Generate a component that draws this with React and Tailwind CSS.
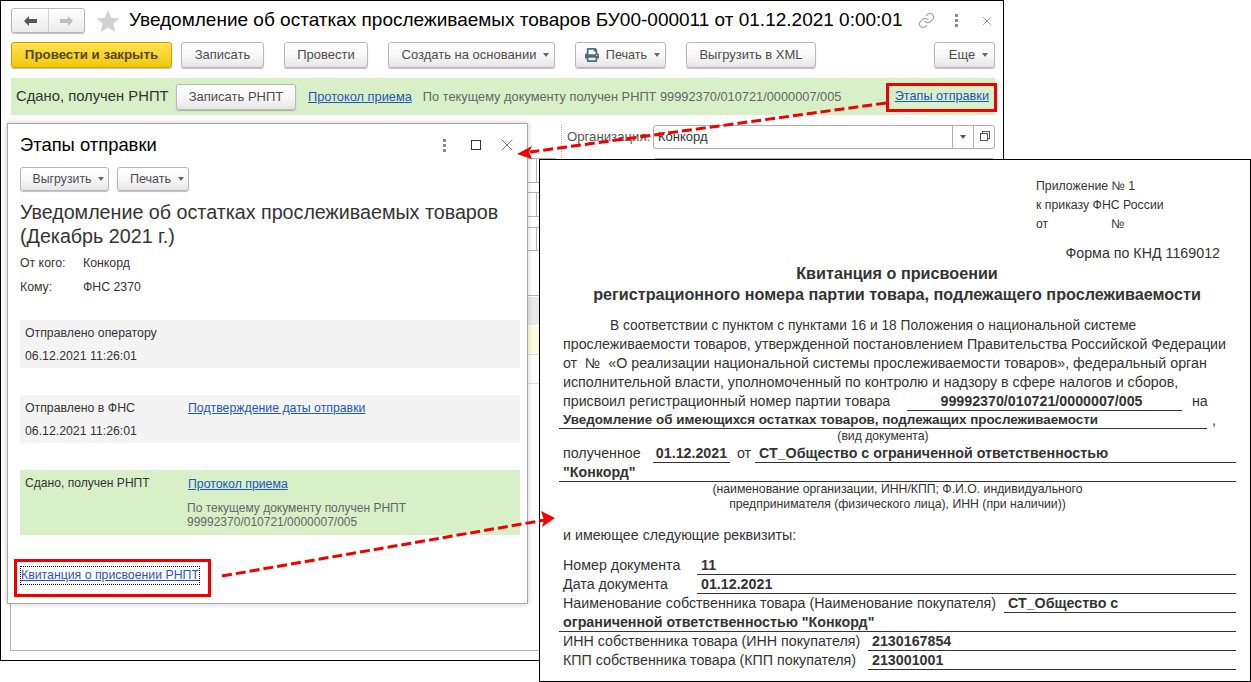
import { FaPrint } from "react-icons/fa";
import { Link as LinkIcon, X } from "lucide-react";

const Caret = () => (
    <span className="ml-[7px] inline-block border-x-[3.5px] border-t-[4px] border-x-transparent border-t-[#666]" />
);

const Btn = ({ children, caret, className = "" }) => (
    <div
        className={`flex h-[26px] items-center justify-center rounded-[3px] border border-[#b8b8b8] bg-gradient-to-b from-white via-[#f8f8f8] to-[#e6e6e6] text-[13px] text-[#4d4d4d] shadow-[0_1px_1px_rgba(0,0,0,0.25)] ${caret ? "pl-[8px]" : ""} ${className}`}
    >
        {children}
        {caret && <Caret />}
    </div>
);

const Kebab = () => (
    <div className="flex flex-col gap-[2px]">
        <span className="h-[3px] w-[3px] bg-[#8a8a8a]" />
        <span className="h-[3px] w-[3px] bg-[#8a8a8a]" />
        <span className="h-[3px] w-[3px] bg-[#8a8a8a]" />
    </div>
);

const BgRow = ({ h, split }) => (
    <div className={`${h} border-b border-[#b4b4b4]`}>
        {split && <div className="h-full w-[526px] border-r border-[#b4b4b4]" />}
    </div>
);

const MainWindow = () => (
    <div className="absolute left-0 top-0 flex h-[661px] w-[1004px] flex-col border border-black bg-white">
        <div className="mt-[7px] flex h-[25px] items-center pl-[10px] pr-[9px]">
            <div className="flex h-[25px] w-[74px] shrink-0 items-center rounded-[3px] border border-[#b8b8b8] bg-gradient-to-b from-white to-[#ececec] shadow-[0_1px_1px_rgba(0,0,0,0.25)]">
                <div className="flex h-full w-[37px] items-center justify-center border-r border-[#cfcfcf]">
                    <svg width="14" height="12" viewBox="0 0 14 12">
                        <path d="M6 1 1 6l5 5V8h8V4H6z" fill="#555" />
                    </svg>
                </div>
                <div className="flex flex-1 items-center justify-center">
                    <svg width="14" height="12" viewBox="0 0 14 12">
                        <path d="M8 1l5 5-5 5V8H0V4h8z" fill="#bdbdbd" />
                    </svg>
                </div>
            </div>
            <svg className="ml-[11px] shrink-0" width="24" height="22" viewBox="0 0 24 23">
                <path d="M12 0l3.500 8 8.500.8-6.400 5.700 1.900 8.500L12 18.500 4.500 23l1.900-8.500L0 8.800 8.500 8z" fill="#d2d2d2" />
            </svg>
            <h1 className="ml-[9px] whitespace-nowrap text-[19px] text-black">
                Уведомление об остатках прослеживаемых товаров БУ00-000011 от 01.12.2021 0:00:01
            </h1>
            <LinkIcon className="ml-auto shrink-0 text-[#a0a0a0]" size={17} strokeWidth={1.5} />
            <div className="ml-[20px]">
                <Kebab />
            </div>
            <X className="ml-[22px] shrink-0 text-[#8c8c8c]" size={14} strokeWidth={1.5} />
        </div>
        <div className="ml-[10px] mr-[8px] mt-[9px] flex">
            <div className="flex h-[26px] w-[161px] items-center justify-center rounded-[3px] border border-[#c4a400] bg-gradient-to-b from-[#ffe24a] to-[#f0c800] text-[13.3px] font-bold text-[#57480a] shadow-[0_1px_1px_rgba(0,0,0,0.25)]">
                Провести и закрыть
            </div>
            <Btn className="ml-[9px] w-[83px]">Записать</Btn>
            <Btn className="ml-[20px] w-[84px]">Провести</Btn>
            <Btn className="ml-[20px] w-[167px]" caret>Создать на основании</Btn>
            <Btn className="ml-[20px] w-[91px] !pl-[4px] !text-[12.6px]" caret>
                <FaPrint className="mr-[7px] text-[#4f6b80]" size={14} />
                Печать
            </Btn>
            <Btn className="ml-[20px] w-[130px]">Выгрузить в XML</Btn>
            <Btn className="ml-auto w-[61px]" caret>Еще</Btn>
        </div>
        <div className="ml-[10px] mr-[8px] mt-[10px] flex h-[37px] items-center bg-[#d8f0c8] pl-[5px] text-[#4d4d4d]">
            <span className="w-[160px] whitespace-nowrap text-[14.8px] text-[#333]">Сдано, получен РНПТ</span>
            <Btn className="h-[26px] w-[120px]">Записать РНПТ</Btn>
            <a className="ml-[12px] whitespace-nowrap text-[12.8px] text-[#1f55c0] underline">Протокол приема</a>
            <span className="ml-[11px] whitespace-nowrap text-[12.8px] text-[#666]">
                По текущему документу получен РНПТ 99992370/010721/0000007/005
            </span>
            <a className="ml-auto mr-[6px] whitespace-nowrap text-[12.7px] text-[#1f55c0] underline">Этапы отправки</a>
        </div>
        <div className="flex flex-1">
            <div className="ml-[9px] mb-[9px] mt-[43px] flex w-[546px] flex-col border-x border-b border-[#b4b4b4]">
                <div className="border-t border-[#b4b4b4]" />
                <BgRow h="h-[24px]" split />
                <BgRow h="h-[10px]" />
                <BgRow h="h-[24px]" split />
                <BgRow h="h-[11px]" />
                <BgRow h="h-[23px]" split />
                <BgRow h="h-[45px]" />
                <div className="mt-[1px] h-[28px] bg-[#e9e9e9]" />
                <div className="mt-[2px] h-[26px] bg-gradient-to-r from-[#ffd890] via-[#fff8d0] to-[#fffbe0]" />
                <div className="mt-[1px] border-t border-[#e0e0e0]" />
                <div className="h-[29px] border-b border-[#e0e0e0]" />
            </div>
            <div className="ml-[5px] mt-[10px] flex-1 border-l border-dotted border-[#b0b0b0] pl-[5px] pr-[8px]">
                <div className="flex h-[24px] items-center">
                    <span className="w-[86px] whitespace-nowrap text-[13.2px] text-[#555]">Организация:</span>
                    <div className="flex h-[24px] flex-1 items-center rounded-[3px] border border-[#b0b0b0] pl-[4px] text-[13px] text-[#333]">
                        <span className="flex-1">Конкорд</span>
                        <div className="flex h-full w-[21px] items-center justify-center border-l border-[#b0b0b0]">
                            <span className="inline-block border-x-[3.5px] border-t-[4px] border-x-transparent border-t-[#555]" />
                        </div>
                        <div className="flex h-full w-[21px] items-center justify-center border-l border-[#b0b0b0]">
                            <span className="h-[8px] w-[8px] border border-[#555] shadow-[2px_-2px_0_-1px_#fff,2px_-2px_0_0_#555]" />
                        </div>
                    </div>
                </div>
                <div className="ml-[86px] mt-[9px] h-[24px] rounded-[3px] border border-[#b0b0b0]" />
            </div>
        </div>
    </div>
);

const Stage = ({ className = "", children }) => (
    <div className={`ml-[12px] w-[500px] text-[12.3px] text-[#333] ${className}`}>{children}</div>
);

const Dialog = () => (
    <div className="absolute left-[7px] top-[123px] flex h-[481px] w-[521px] flex-col border border-[#a8a8a8] bg-white shadow-[0_0_6px_rgba(0,0,0,0.2)]">
        <div className="mt-[9px] flex h-[24px] items-center pl-[12px] pr-[10px]">
            <h2 className="text-[18.4px] text-black">Этапы отправки</h2>
            <div className="ml-auto">
                <Kebab />
            </div>
            <span className="ml-[25px] h-[10px] w-[10px] border border-[#333]" />
            <X className="ml-[16px] shrink-0 text-[#555]" size={20} strokeWidth={1} />
        </div>
        <div className="ml-[12px] mt-[10px] flex gap-[8px]">
            <Btn className="!h-[24px] w-[89px] !text-[12.3px]" caret>Выгрузить</Btn>
            <Btn className="!h-[24px] w-[72px] !text-[12.5px]" caret>Печать</Btn>
        </div>
        <div className="ml-[12px] mt-[9px] whitespace-nowrap text-[19.7px] leading-[24px] text-[#333]">
            Уведомление об остатках прослеживаемых товаров
            <br />
            (Декабрь 2021 г.)
        </div>
        <div className="ml-[12px] mt-[3px] grid grid-cols-[63px_1fr] text-[12.3px] leading-[24px] text-[#333]">
            <span>От кого:</span>
            <span>Конкорд</span>
            <span>Кому:</span>
            <span>ФНС 2370</span>
        </div>
        <Stage className="mt-[21px] h-[48px] bg-[#f4f4f4] pl-[5px] pt-[2px] leading-[23px]">
            <div>Отправлено оператору</div>
            <div>06.12.2021 11:26:01</div>
        </Stage>
        <Stage className="mt-[27px] grid h-[48px] grid-cols-[163px_1fr] bg-[#f4f4f4] pl-[5px] pt-[2px] leading-[23px]">
            <div>Отправлено в ФНС</div>
            <a className="text-[#1f55c0] underline">Подтверждение даты отправки</a>
            <div>06.12.2021 11:26:01</div>
        </Stage>
        <Stage className="mt-[27px] grid h-[65px] grid-cols-[163px_1fr] bg-[#d8f0c8] pl-[5px] pt-[3px]">
            <div className="text-[12.1px] leading-[20px]">Сдано, получен РНПТ</div>
            <div>
                <a className="block leading-[22px] text-[#1f55c0] underline">Протокол приема</a>
                <div className="-ml-[1px] mt-[6px] text-[12px] leading-[14px] text-[#666]">
                    По текущему документу получен РНПТ
                    <br />
                    99992370/010721/0000007/005
                </div>
            </div>
        </Stage>
        <a className="ml-[12px] mt-[31px] h-[19px] w-[180px] whitespace-nowrap border border-dotted border-black text-[12.3px] leading-[17px] text-[#1f55c0] underline">
            Квитанция о присвоении РНПТ
        </a>
    </div>
);

const Line = ({ children, className = "" }) => (
    <div className={`h-[19px] whitespace-nowrap leading-[19px] ${className}`}>{children}</div>
);

// underlined value in the receipt form
const Val = ({ children, className = "" }) => (
    <span className={`h-full border-b border-[#333] font-bold ${className}`}>{children}</span>
);

const Row = ({ children, className = "" }) => (
    <div className={`flex h-[19px] whitespace-nowrap pl-[4px] leading-[19px] ${className}`}>{children}</div>
);

const Receipt = () => (
    <div className="absolute left-[539px] top-[159px] h-[523px] w-[712px] border border-black bg-white text-[14.25px] text-[#333]">
        <div className="ml-[496px] pt-[17px] text-[12.3px] leading-[19px]">
            <div>Приложение № 1</div>
            <div>к приказу ФНС России</div>
            <div className="flex">
                <span className="w-[75px]">от</span>
                <span>№</span>
            </div>
        </div>
        <div className="mt-[10px] pr-[30px] text-right leading-[19px]">Форма по КНД 1169012</div>
        <div className="pl-[4px] text-center text-[16.2px] font-bold leading-[21px]">
            <div>Квитанция о присвоении</div>
            <div>регистрационного номера партии товара, подлежащего прослеживаемости</div>
        </div>
        <div className="ml-[19px] mt-[11px] w-[677px]">
            <Line className="pl-[51px] text-[13.75px]">В соответствии с пунктом с пунктами 16 и 18 Положения о национальной системе</Line>
            <Line className="pl-[4px]">прослеживаемости товаров, утвержденной постановлением Правительства Российской Федерации</Line>
            <Line className="pl-[4px]">от&nbsp; №&nbsp; «О реализации национальной системы прослеживаемости товаров», федеральный орган</Line>
            <Line className="pl-[4px]">исполнительной власти, уполномоченный по контролю и надзору в сфере налогов и сборов,</Line>
            <Row>
                <span className="w-[344px]">присвоил регистрационный номер партии товара</span>
                <Val className="w-[275px] pr-[6px] text-center">99992370/010721/0000007/005</Val>
                <span className="ml-[10px]">на</span>
            </Row>
            <div className="flex h-[18px] whitespace-nowrap leading-[18px]">
                <Val className="w-[648px] pl-[4px] text-[13.4px]">Уведомление об имеющихся остатках товаров, подлежащих прослеживаемости</Val>
                <span className="ml-[5px]">,</span>
            </div>
            <div className="h-[15px] w-[648px] text-center text-[12.2px] leading-[15px]">(вид документа)</div>
            <Row>
                <span className="w-[90px]">полученное</span>
                <Val className="w-[77px] text-center">01.12.2021</Val>
                <span className="ml-[7px] w-[18px]">от</span>
                <Val className="flex-1 pl-[4px]">СТ_Общество с ограниченной ответственностью</Val>
            </Row>
            <div className="h-[19px] border-b border-[#333] pl-[4px] font-bold leading-[19px]">"Конкорд"</div>
            <div className="text-center text-[12.25px] leading-[15px]">
                (наименование организации, ИНН/КПП; Ф.И.О. индивидуального
                <br />
                предпринимателя (физического лица), ИНН (при наличии))
            </div>
            <Line className="mt-[14px] pl-[4px]">и имеющее следующие реквизиты:</Line>
            <Row className="mt-[11px]">
                <span className="w-[134px]">Номер документа</span>
                <Val className="flex-1 pl-[4px]">11</Val>
            </Row>
            <Row>
                <span className="w-[134px]">Дата документа</span>
                <Val className="flex-1 pl-[4px]">01.12.2021</Val>
            </Row>
            <Row>
                <span className="w-[441px]">Наименование собственника товара (Наименование покупателя)</span>
                <Val className="flex-1 pl-[4px]">СТ_Общество с</Val>
            </Row>
            <div className="h-[19px] border-b border-[#333] pl-[4px] font-bold leading-[19px]">ограниченной ответственностью "Конкорд"</div>
            <Row>
                <span className="w-[305px]">ИНН собственника товара (ИНН покупателя)</span>
                <Val className="flex-1 pl-[4px]">2130167854</Val>
            </Row>
            <Row>
                <span className="w-[305px]">КПП собственника товара (КПП покупателя)</span>
                <Val className="flex-1 pl-[4px]">213001001</Val>
            </Row>
        </div>
    </div>
);

const Annotations = () => (
    <>
        <div className="absolute left-[886px] top-[83px] h-[29px] w-[111px] border-[3px] border-[#f00000]" />
        <div className="absolute left-[14px] top-[559px] h-[38px] w-[197px] border-[3px] border-[#f00000]" />
        <svg className="absolute left-0 top-0" width="1251" height="682" viewBox="0 0 1251 682">
            <line x1="886" y1="103" x2="530" y2="152" stroke="#f00000" strokeWidth="3" strokeDasharray="10 4" />
            <path d="M517 154 532 146 529 152 532 159z" fill="#f00000" />
            <line x1="222" y1="576" x2="545" y2="520" stroke="#f00000" strokeWidth="3" strokeDasharray="10 4" />
            <path d="M555 518 541 511 544 520 542 527z" fill="#f00000" />
        </svg>
    </>
);

export default function App() {
    return (
        <div className="relative h-[682px] w-[1251px] overflow-hidden bg-white font-['Liberation_Sans',Arial,sans-serif]">
            <MainWindow />
            <Dialog />
            <Receipt />
            <Annotations />
        </div>
    );
}
